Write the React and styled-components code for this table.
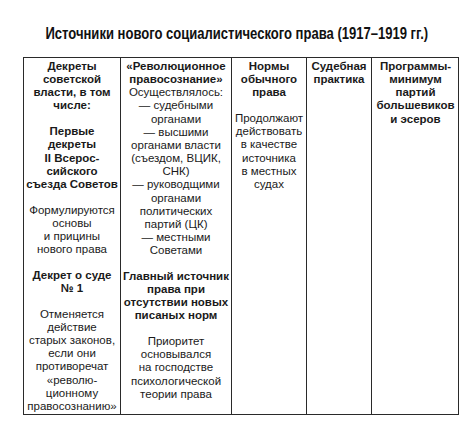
import React from "react";
import styled, { createGlobalStyle } from "styled-components";

const Global = createGlobalStyle`
  html, body {
    margin: 0;
    padding: 0;
    background: #ffffff;
  }
`;

const Page = styled.div`
  width: 474px;
  height: 431px;
  padding-top: 24px;
  box-sizing: border-box;
  font-family: "Liberation Sans", Arial, sans-serif;
  color: #1a1a1a;
`;

const Title = styled.h1`
  margin: 0 0 13px;
  height: 20px;
  line-height: 20px;
  text-align: center;
  font-weight: 700;
  font-size: 16px;
  color: #111111;
  white-space: nowrap;
`;

// the printed title uses a condensed face, squeeze the regular one
const Squeeze = styled.span`
  display: inline-block;
  transform: scaleX(0.815);
  transform-origin: center;
`;

const Table = styled.div`
  margin-left: 23px;
  width: 436px;
  height: 358px;
  box-sizing: border-box;
  display: grid;
  grid-template-columns: 96px 111px 75px 65px 88px;
  border: 1px solid #2a2a2a;
`;

const Cell = styled.div`
  padding: 2px 0 0;
  border-left: ${(p) => (p.$first ? "none" : "1px solid #2a2a2a")};
  text-align: center;
  font-size: 11.5px;
  line-height: 13.15px;
  white-space: nowrap;
  overflow: hidden;
`;

const Para = styled.p`
  margin: 0 0 12.6px;
  font-weight: ${(p) => (p.$bold ? 700 : 400)};
`;

const lines = (arr) =>
  arr.map((l, i) => (
    <React.Fragment key={i}>
      {i > 0 && <br />}
      {l}
    </React.Fragment>
  ));

const COLUMNS = [
  [
    { bold: true, text: ["Декреты", "советской", "власти, в том", "числе:"] },
    { bold: true, text: ["Первые", "декреты", "II Всерос-", "сийского", "съезда Советов"] },
    { text: ["Формулируются", "основы", "и прицины", "нового права"] },
    { bold: true, text: ["Декрет о суде", "№ 1"] },
    {
      text: [
        "Отменяется",
        "действие",
        "старых законов,",
        "если они",
        "противоречат",
        "«револю-",
        "ционному",
        "правосознанию»",
      ],
    },
  ],
  [
    {
      text: [
        <b key="a">«Революционное</b>,
        <b key="b">правосознание»</b>,
        "Осуществлялось:",
        "— судебными",
        "органами",
        "— высшими",
        "органами власти",
        "(съездом, ВЦИК,",
        "СНК)",
        "— руководщими",
        "органами",
        "политических",
        "партий (ЦК)",
        "— местными",
        "Советами",
      ],
    },
    {
      bold: true,
      text: ["Главный источник", "права при", "отсутствии новых", "писаных норм"],
    },
    {
      text: ["Приоритет", "основывался", "на господстве", "психологической", "теории права"],
    },
  ],
  [
    { bold: true, text: ["Нормы", "обычного", "права"] },
    {
      text: ["Продолжают", "действовать", "в качестве", "источника", "в местных", "судах"],
    },
  ],
  [{ bold: true, text: ["Судебная", "практика"] }],
  [
    {
      bold: true,
      text: ["Программы-", "минимум", "партий", "большевиков", "и эсеров"],
    },
  ],
];

export default function App() {
  return (
    <Page>
      <Global />
      <Title>
        <Squeeze>Источники нового социалистического права (1917–1919 гг.)</Squeeze>
      </Title>
      <Table>
        {COLUMNS.map((col, ci) => (
          <Cell key={ci} $first={ci === 0}>
            {col.map((p, pi) => (
              <Para key={pi} $bold={p.bold}>
                {lines(p.text)}
              </Para>
            ))}
          </Cell>
        ))}
      </Table>
    </Page>
  );
}
